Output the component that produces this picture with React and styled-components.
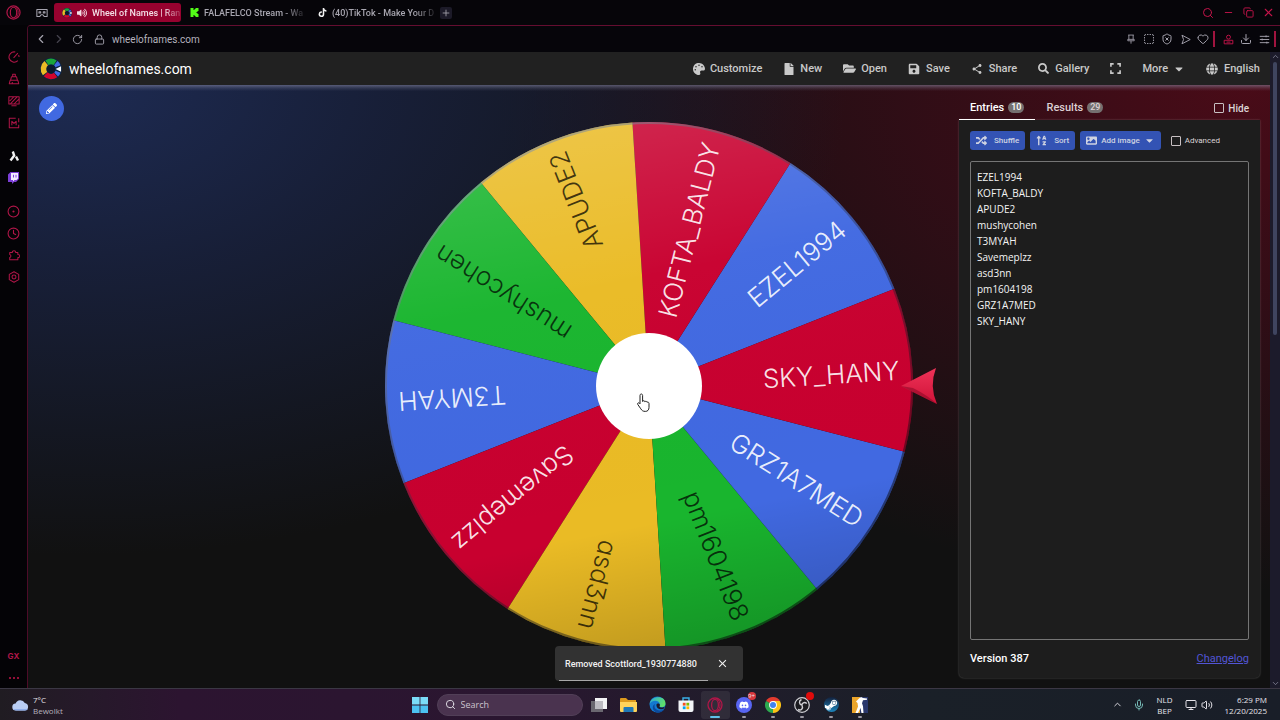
import React from "react";
import styled, {createGlobalStyle} from "styled-components";
import {
    FaPalette, FaFile, FaFolderOpen, FaSave, FaSearch, FaCaretDown, FaGlobe,
    FaRandom, FaSortAlphaUp, FaImage, FaVolumeUp, FaTiktok, FaPencilAlt,
    FaSteamSymbol, FaDiscord
} from "react-icons/fa";
import {MdShare, MdClose} from "react-icons/md";
import {SiKick} from "react-icons/si";
import {
    ChevronLeft, ChevronRight, ChevronUp, ChevronDown, RotateCw, Lock, SquareDashed, ShieldX,
    Heart, Download, Search, Minus, Copy, X, Clock, CircleDot,
    Mic, Volume2, Monitor, Plus
} from "lucide-react";

const gxRed = "#c4144a";
const gxMuted = "#b01648";
const blue = "#4169e1";
const buttonBlue = "#3353b4";
const uiFont = `Roboto, "Liberation Sans", sans-serif`;
const systemFont = `"Open Sans", "Noto Sans", sans-serif`;

const GlobalStyle = createGlobalStyle`
    * {
        box-sizing: border-box;
    }
    body {
        margin: 0;
        background: #111;
        color: white;
        font-family: ${uiFont};
        overflow: hidden;
    }
    button {
        border: 0;
        background: none;
        color: inherit;
        font: inherit;
        padding: 0;
        cursor: pointer;
    }
    a {
        color: inherit;
        text-decoration: none;
    }
    svg {
        display: block;
        flex: none;
    }
`

const Screen = styled.div`
    height: 100vh;
    display: flex;
    flex-direction: column;
`

const TabBar = styled.header`
    height: 25px;
    flex: none;
    display: flex;
    align-items: center;
    background: #060509;
    padding: 0 6px;
    font-size: 9px;
`

const OperaButton = styled.button`
    width: 16px;
    color: ${gxMuted};
`

const WorkspaceButton = styled.button`
    margin: 0 6px 0 14px;
    color: #a5a3ae;
`

const Tab = styled.a`
    width: 127px;
    height: 19px;
    margin-right: 1px;
    padding: 0 8px;
    display: flex;
    align-items: center;
    gap: 5px;
    border-radius: 3px;
    color: ${({active}) => active ? "#f3dfe7" : "#a8a6b0"};
    background: ${({active}) => active ? "#97022f" : "transparent"};
    font-weight: 500;
`

const TabTitle = styled.span`
    flex: 1;
    white-space: nowrap;
    mask-image: linear-gradient(90deg, black 80%, rgba(0, 0, 0, .2));
`

const NewTab = styled.button`
    display: grid;
    place-items: center;
    width: 12px;
    height: 12px;
    margin-left: 2px;
    border-radius: 2px;
    background: #1c1a28;
    color: #a8a6b0;
`

const WindowControls = styled.div`
    display: flex;
    gap: 8px;
    margin-left: auto;
    color: ${gxRed};

    button {
        display: grid;
        place-items: center;
        width: 12px;
    }
`

const Body = styled.div`
    flex: 1;
    min-height: 0;
    display: flex;
    background: #040306;
`

const Sidebar = styled.nav`
    width: 27px;
    flex: none;
    display: flex;
    flex-direction: column;
    justify-content: space-between;
    padding: 21px 0 2px;
    color: ${gxMuted};
`

const SideGroup = styled.div`
    display: flex;
    flex-direction: column;
    margin-bottom: ${({last}) => last ? "0" : "11px"};

    button {
        height: 22px;
        display: grid;
        place-items: center;
        font-family: Inter, ${uiFont};
        font-size: 8px;
        font-weight: 700;
    }
`

const Window = styled.div`
    flex: 1;
    min-width: 0;
    display: flex;
    flex-direction: column;
    border-left: 1px solid #4d0c28;
    border-top: 1px solid #640d30;
    border-top-left-radius: 4px;
    overflow: hidden;
`

const AddressBar = styled.div`
    height: 26px;
    flex: none;
    display: flex;
    align-items: center;
    background: #06050a;
    color: #a5a3ae;
    padding-left: 4px;
`

const BarButton = styled.button`
    width: 18px;
    height: 18px;
    display: grid;
    place-items: center;
    color: ${({tone}) => tone || "inherit"};
`

const LockSlot = styled.span`
    width: 26px;
    display: grid;
    place-items: center;
`

const Address = styled.span`
    flex: 1;
    font-size: 10px;
    color: #b5b3be;
`

const RedMark = styled.i`
    width: 2px;
    height: 16px;
    margin: 0 4px 0 1px;
    background: #a0143f;
`

const Page = styled.div`
    flex: 1;
    min-height: 0;
    display: flex;
`

const Site = styled.div`
    flex: 1;
    min-width: 0;
    display: flex;
    flex-direction: column;
`

const ScrollTrack = styled.div`
    width: 10px;
    flex: none;
    display: flex;
    flex-direction: column;
    align-items: center;
    gap: 1px;
    background: #1c1b2b;
    color: #8b8ca0;
`

const ScrollThumb = styled.div`
    height: 43%;
    width: 4px;
    margin-bottom: auto;
    border-radius: 2px;
    background: #3f4560;
`

const SiteHeader = styled.header`
    height: 33px;
    flex: none;
    display: flex;
    align-items: center;
    justify-content: space-between;
    background: #212121;
    padding: 0 10px 0 12px;
`

const Brand = styled.a`
    display: flex;
    align-items: center;
    gap: 7px;
    font-size: 14px;
    color: white;
`

const Menu = styled.nav`
    display: flex;
    align-items: center;
    gap: 21px;
    font-size: 11px;
    font-weight: 500;
    color: #c9c9c9;
`

const MenuButton = styled.button`
    display: flex;
    align-items: center;
    gap: ${({tight}) => tight ? "5px" : "6px"};
`

const Stage = styled.main`
    flex: 1;
    min-height: 0;
    position: relative;
    display: grid;
    grid-template-columns: 1fr auto 1fr;
    padding-top: 1px;
    background:
        linear-gradient(180deg, rgba(150, 150, 180, .5), rgba(150, 150, 180, .2) 3px, transparent 6px),
        radial-gradient(ellipse 62% 78% at 4% 0%, rgba(30, 44, 86, .95), rgba(26, 36, 70, .72) 40%, transparent 100%),
        radial-gradient(ellipse 60% 84% at 98% 0%, rgba(76, 11, 24, .95), rgba(60, 12, 24, .72) 45%, transparent 100%),
        #111;
`

const EditButton = styled.button`
    width: 25px;
    height: 25px;
    margin: 10px 0 0 11px;
    display: grid;
    place-items: center;
    border-radius: 50%;
    background: ${blue};
    color: white;
`

const WheelSvg = styled.svg`
    height: calc(100vh - 120px);
    aspect-ratio: 1;
`

const WheelLabel = styled.text`
    font-family: Inter, "Liberation Sans", sans-serif;
    font-size: 26px;
    font-weight: 350;
    font-feature-settings: "cv11", "cv09";
    text-anchor: end;
    dominant-baseline: central;
    fill: ${({dark}) => dark ? "rgba(0, 0, 0, .72)" : "rgba(255, 255, 255, .9)"};
`

const SidePanel = styled.aside`
    justify-self: end;
    width: 301px;
    margin: 0 10px 10px 0;
    display: flex;
    flex-direction: column;
`

const PanelTabs = styled.div`
    height: 34px;
    flex: none;
    display: flex;
    align-items: flex-end;
    font-size: 11px;
    font-weight: 500;
`

const PanelTab = styled.button`
    height: 24px;
    padding: 0 11px;
    display: flex;
    align-items: center;
    gap: 4px;
    color: ${({active}) => active ? "white" : "#ddd0d3"};
    border-bottom: 1px solid ${({active}) => active ? "white" : "transparent"};
`

const Badge = styled.span`
    padding: 0 3px;
    line-height: 11px;
    border-radius: 6px;
    background: #757070;
    font-size: 9px;
`

const CheckLabel = styled.label`
    display: flex;
    align-items: center;
    gap: 4px;
    font-size: ${({small}) => small ? "8px" : "10px"};
    color: #dcd5d6;
    margin-left: ${({push}) => push ? "auto" : "5px"};
    padding: ${({push}) => push ? "0 11px 0 0" : "0"};
    height: ${({push}) => push ? "24px" : "auto"};
`

const Checkbox = styled.input`
    appearance: none;
    width: 10px;
    height: 10px;
    margin: 0;
    border: 1px solid #c8c0c2;
    border-radius: 1px;
`

const PanelCard = styled.section`
    flex: 1;
    min-height: 0;
    display: flex;
    flex-direction: column;
    padding: 11px;
    background: #1d1d1d;
    border-radius: 0 0 5px 5px;
    box-shadow: 0 0 2px rgba(255, 255, 255, .3);
`

const Tools = styled.div`
    display: flex;
    align-items: center;
    gap: 5px;
    margin-bottom: 11px;
`

const ToolButton = styled.button`
    height: 19px;
    padding: 0 6px;
    display: flex;
    align-items: center;
    gap: ${({wide}) => wide ? "7px" : "4px"};
    border-radius: 3px;
    background: ${buttonBlue};
    color: #cfd3e2;
    font-size: 8px;
    font-weight: 500;
    white-space: nowrap;
`

const EntriesBox = styled.textarea`
    flex: 1;
    width: 100%;
    resize: none;
    padding: 7px 6px;
    border: 1px solid #757575;
    border-radius: 2px;
    background: transparent;
    color: #f4f4f4;
    font-family: ${systemFont};
    font-size: 10px;
    line-height: 16px;
`

const PanelFooter = styled.footer`
    display: flex;
    justify-content: space-between;
    align-items: center;
    padding-top: 11px;
    line-height: 16px;
    font-size: 11px;
    font-weight: 500;

    a {
        color: #5355d6;
        font-weight: 400;
        text-decoration: underline;
    }
`

const Toast = styled.div`
    position: absolute;
    bottom: 7px;
    left: 50%;
    transform: translateX(-50%);
    width: 188px;
    height: 35px;
    padding: 0 14px 0 10px;
    display: flex;
    align-items: center;
    justify-content: space-between;
    border-radius: 4px;
    background: #323232;
    font-size: 9px;
    font-weight: 500;
    color: #f2f2f2;
    white-space: nowrap;

    &::after {
        content: "";
        position: absolute;
        left: 4px;
        bottom: 0;
        width: 79%;
        height: 1px;
        background: #a8a8a8;
    }
`

const Taskbar = styled.footer`
    height: 32px;
    flex: none;
    display: grid;
    grid-template-columns: 1fr auto 1fr;
    align-items: center;
    border-top: 1px solid #3b3744;
    background: linear-gradient(90deg, #201c22 0%, #26192a 7%, #2c1430 14%, #2a1630 40%, #211c2b 56%, #1a2028 72%, #191e28 100%);
    font-family: ${systemFont};
    font-size: 8px;
    line-height: 11px;
    color: #e6e4ea;
`

const Weather = styled.div`
    display: flex;
    align-items: center;
    gap: 4px;
    padding-left: 12px;
`

const Muted = styled.span`
    color: #b5b1bb;
`

const Apps = styled.div`
    display: flex;
    align-items: center;
`

const AppButton = styled.button`
    position: relative;
    width: 29px;
    height: 28px;
    display: grid;
    place-items: center;
    border-radius: 3px;
    background: ${({active}) => active ? "rgba(255, 255, 255, .07)" : "none"};

    &::after {
        content: "";
        position: absolute;
        bottom: 1px;
        width: ${({active}) => active ? "10px" : "4px"};
        height: 2px;
        border-radius: 1px;
        background: ${({active, running}) => active ? "#5fc0ea" : running ? "#9b99a3" : "none"};
    }
`

const SearchBox = styled.label`
    width: 146px;
    height: 22px;
    margin: 0 2px;
    padding: 0 7px;
    display: flex;
    align-items: center;
    gap: 5px;
    border-radius: 11px;
    border: 1px solid #513f57;
    background: #4a334f;

    input {
        width: 100%;
        padding: 0;
        border: 0;
        outline: 0;
        background: none;
        font: inherit;
        font-size: 9px;
        color: white;
    }
    input::placeholder {
        color: #cbc3ce;
        opacity: 1;
    }
`

const Notice = styled.span`
    position: absolute;
    top: 1px;
    right: 3px;
    min-width: 8px;
    height: 8px;
    line-height: 8px;
    border-radius: 4px;
    background: ${({tone}) => tone};
    font-size: 6px;
    text-align: center;
`

const Tray = styled.div`
    display: flex;
    align-items: center;
    justify-content: flex-end;
    padding-right: 13px;
`

const TrayText = styled.div`
    text-align: ${({align}) => align};
    margin-left: 12px;
`

const TrayIcons = styled.div`
    display: flex;
    gap: ${({gap}) => gap};
    margin-left: 12px;
    align-items: center;
`

const entries = [
    {name: "EZEL1994", color: "#4169e1"},
    {name: "KOFTA_BALDY", color: "#c8002f"},
    {name: "APUDE2", color: "#eabb25", dark: true},
    {name: "mushycohen", color: "#19b52e", dark: true},
    {name: "T3MYAH", color: "#4169e1"},
    {name: "Savemeplzz", color: "#c8002f"},
    {name: "asd3nn", color: "#eabb25", dark: true},
    {name: "pm1604198", color: "#19b52e", dark: true},
    {name: "GRZ1A7MED", color: "#4169e1"},
    {name: "SKY_HANY", color: "#c8002f"}
];

const wheelRadius = 264;
const sliceAngle = 360 / entries.length;
const firstAngle = -39.6;

function point(angle) {
    const rad = angle * Math.PI / 180;
    return `${wheelRadius * Math.cos(rad)} ${wheelRadius * Math.sin(rad)}`;
}

function Wheel() {
    return (
        <WheelSvg viewBox="-300 -300 600 600" role="img" aria-label="Wheel">
            <defs>
                <linearGradient id="shade" x1="0.4" y1="0" x2="0.6" y2="1">
                    <stop offset="0" stopColor="#fff" stopOpacity=".15"/>
                    <stop offset=".3" stopColor="#fff" stopOpacity=".02"/>
                    <stop offset=".75" stopColor="#000" stopOpacity="0"/>
                    <stop offset="1" stopColor="#000" stopOpacity=".18"/>
                </linearGradient>
                <linearGradient id="rim" x1="0" y1="0" x2=".7" y2="1">
                    <stop offset="0" stopColor="#b5c4cc" stopOpacity=".7"/>
                    <stop offset=".5" stopColor="#334" stopOpacity=".4"/>
                    <stop offset="1" stopColor="#000" stopOpacity=".5"/>
                </linearGradient>
                <linearGradient id="pointer" x1="0" y1="0" x2="0" y2="1">
                    <stop offset="0" stopColor="#ee3358"/>
                    <stop offset="1" stopColor="#d01238"/>
                </linearGradient>
            </defs>
            {entries.map((entry, i) => {
                const middle = firstAngle - i * sliceAngle;
                return (
                    <path
                        key={entry.name}
                        fill={entry.color}
                        d={`M0 0L${point(middle - sliceAngle / 2)}A${wheelRadius} ${wheelRadius} 0 0 1 ${point(middle + sliceAngle / 2)}Z`}
                    />
                );
            })}
            <circle r={wheelRadius} fill="url(#shade)"/>
            <circle r={wheelRadius - 1} fill="none" stroke="url(#rim)" strokeWidth="2"/>
            {entries.map((entry, i) => (
                <WheelLabel
                    key={entry.name}
                    dark={entry.dark}
                    x="251"
                    transform={`rotate(${firstAngle - i * sliceAngle})`}
                >
                    {entry.name}
                </WheelLabel>
            ))}
            <circle r="53" fill="#fff"/>
            <path d="M252 0L287 -18Q280 0 288 18Z" fill="url(#pointer)"/>
            <path d="M252 0L264 2Q278 9 288 18Z" fill="#8f0a28" opacity=".6"/>
            <path
                d="M-9 9.500c0-2 2.600-2 2.600 0v6c.4-1.200 2.200-1 2.300.3.600-.8 2-.6 2.100.5.700-.6 2 0 2 1.100v4c0 2.600-1.400 4-3.700 4-2.300 0-3.400-.8-4.500-2.600l-3-4.300c-.8-1.300.7-2.300 1.700-1.300l.5.600z"
                fill="#fff" stroke="#222" strokeWidth="1"
            />
        </WheelSvg>
    );
}

function WheelLogo({size}) {
    return (
        <svg width={size} height={size} viewBox="0 0 24 24" fill="none" strokeWidth="6">
            <circle cx="12" cy="12" r="12" fill="#0c2440"/>
            <path d="M7.500 5.200A8.200 8.200 0 0 1 16.500 5.200" stroke="#1ba53a"/>
            <path d="M5.500 17A8.200 8.200 0 0 1 6.800 5.600" stroke="#eabb25"/>
            <path d="M17 18.500A8.200 8.200 0 0 1 6.200 17.800" stroke="#d2042d"/>
            <path d="M17.200 5.700A8.200 8.200 0 0 1 19.600 9M19.600 15A8.200 8.200 0 0 1 17.600 18" stroke="#4169e1"/>
            <circle cx="12" cy="12" r="4.500" fill="#0b1a2c"/>
            <path d="M17 12l6-3v6z" fill="#fff"/>
        </svg>
    );
}

function OperaLogo({size}) {
    return (
        <svg width={size} height={size} viewBox="0 0 16 16" fill="none" stroke={gxMuted} strokeWidth="1.300">
            <circle cx="8" cy="8" r="7"/>
            <ellipse cx="8" cy="8" rx="3.400" ry="5.600"/>
            <path d="M10 2c4 2 4 10 0 12" strokeWidth="1"/>
        </svg>
    );
}

// outlined 14x14 icon used by the browser chrome
function LineIcon({d, size = 12}) {
    return (
        <svg width={size} height={size} viewBox="0 0 14 14" fill="none" stroke="currentColor" strokeWidth="1.200" strokeLinejoin="round">
            <path d={d}/>
        </svg>
    );
}

const line = {
    gauge: "M8.500 1.200A6 6 0 1 0 11.500 11.200M12.900 7a6 6 0 0 0-.6-2.300M6.500 8l5-5.500",
    cleaner: "M5.500 1.500h3v3h-3zM4 4.500h6l1 4H3zM2.500 8.500h9l1 4h-11zM5 12.500V10.500",
    screen: "M1 2h12v8.500H1zM4 12.500h6M2 7l5-5M3 10l8-8M7 10.500l6-6",
    mods: "M9 1.500H1.500v11h11V9M12.500 1.500V6M4.500 9.500V5l2.500 2.500L9.500 5v4.500",
    puzzle: "M2 4h3a2 2 0 1 1 4 0h2.500v2.500a1.800 1.800 0 1 1 0 3.500V12.500H2V10a1.800 1.800 0 0 0 0-3.500z",
    hexagon: "M7 .8l5.500 3.100v6.200L7 13.200l-5.500-3.100V3.900zM9.300 7a2.300 2.300 0 1 1-4.600 0 2.300 2.300 0 0 1 4.600 0z",
    workspace: "M1 3h12v8H9.500L8 9H6l-1.500 2H1zM3.500 5.500h2v1.500h-2zM8.500 5.500h2v1.500h-2z",
    profile: "M9.500 4a2.500 2.500 0 1 1-5 0 2.500 2.500 0 0 1 5 0zM1.500 12.500V8h11v4.500zM4.500 10.300h5",
    sliders: "M1 3h12M1 7h12M1 11h12M9 1.800v2.400M4 5.800v2.400M10 9.800v2.400",
    pin: "M3 1.500h8M4 1.500v6M10 1.500v6M2.500 7.500h9M2.500 7.500v2h9v-2M7 9.500v4",
    play: "M2.500 1.500L13 7 2.500 12.500 4.500 7z"
};

function BrowserSidebar() {
    return (
        <Sidebar>
            <div>
                <SideGroup>
                    <button aria-label="Speed"><LineIcon d={line.gauge}/></button>
                    <button aria-label="Cleaner"><LineIcon d={line.cleaner}/></button>
                    <button aria-label="Player"><LineIcon d={line.screen}/></button>
                    <button aria-label="Mods"><LineIcon d={line.mods}/></button>
                </SideGroup>
                <SideGroup>
                    <button aria-label="Aria">
                        <svg width="12" height="12" viewBox="0 0 12 12" fill="none" stroke="#f2f2f2" strokeWidth="2.400">
                            <path d="M4.800 1.500L6.200 5.500 2.500 10.500M8 6.500l2 4"/>
                        </svg>
                    </button>
                    <button aria-label="Twitch">
                        <svg width="11" height="12" viewBox="0 0 11 12">
                            <path d="M2.500 0H11v7L8 10H6l-2 2V10H0V2.500z" fill="#7c3fd6"/>
                            <path d="M3 1h7v5.500L8.500 8h-2L5 9.500V8H3z" fill="#f3edff"/>
                            <path d="M5.500 2.800v2.700M8 2.800v2.700" stroke="#7c3fd6"/>
                        </svg>
                    </button>
                </SideGroup>
                <SideGroup>
                    <button aria-label="Player"><CircleDot size={13} strokeWidth={2}/></button>
                    <button aria-label="History"><Clock size={13} strokeWidth={2}/></button>
                    <button aria-label="Extensions"><LineIcon d={line.puzzle}/></button>
                    <button aria-label="Settings"><LineIcon d={line.hexagon}/></button>
                </SideGroup>
            </div>
            <div>
                <SideGroup last>
                    <button>GX</button>
                </SideGroup>
                <button aria-label="More">
                    <svg width="27" height="8" viewBox="0 0 27 8" fill={gxRed}>
                        <circle cx="10" cy="4" r="1"/>
                        <circle cx="14" cy="4" r="1"/>
                        <circle cx="18" cy="4" r="1"/>
                    </svg>
                </button>
            </div>
        </Sidebar>
    );
}

function BrowserTabs() {
    return (
        <TabBar>
            <OperaButton aria-label="Menu"><OperaLogo size={15}/></OperaButton>
            <WorkspaceButton aria-label="Workspace"><LineIcon d={line.workspace}/></WorkspaceButton>
            <Tab href="#wheel" active>
                <WheelLogo size={10}/>
                <FaVolumeUp size={10}/>
                <TabTitle>Wheel of Names | Ran</TabTitle>
            </Tab>
            <Tab href="#kick">
                <SiKick size={9} color="#53fc18"/>
                <TabTitle>FALAFELCO Stream - Wa</TabTitle>
            </Tab>
            <Tab href="#tiktok">
                <FaTiktok size={9} color="#f2f2f2"/>
                <TabTitle>(40)TikTok - Make Your D</TabTitle>
            </Tab>
            <NewTab aria-label="New tab"><Plus size={10}/></NewTab>
            <WindowControls>
                <button aria-label="Search"><Search size={12}/></button>
                <button aria-label="Minimize"><Minus size={11}/></button>
                <button aria-label="Restore"><Copy size={11}/></button>
                <button aria-label="Close"><X size={13}/></button>
            </WindowControls>
        </TabBar>
    );
}

function BrowserAddress() {
    return (
        <AddressBar>
            <BarButton aria-label="Back"><ChevronLeft size={14}/></BarButton>
            <BarButton aria-label="Forward" tone="#45434e"><ChevronRight size={14}/></BarButton>
            <BarButton aria-label="Reload"><RotateCw size={11}/></BarButton>
            <LockSlot><Lock size={11}/></LockSlot>
            <Address>wheelofnames.com</Address>
            <BarButton aria-label="Pin"><LineIcon d={line.pin} size={10}/></BarButton>
            <BarButton aria-label="Snapshot"><SquareDashed size={12}/></BarButton>
            <BarButton aria-label="Blocker"><ShieldX size={12}/></BarButton>
            <BarButton aria-label="Send"><LineIcon d={line.play} size={11}/></BarButton>
            <BarButton aria-label="Favourite"><Heart size={12}/></BarButton>
            <RedMark/>
            <BarButton aria-label="Profile" tone={gxRed}><LineIcon d={line.profile} size={11}/></BarButton>
            <BarButton aria-label="Downloads"><Download size={12}/></BarButton>
            <BarButton aria-label="Easy setup"><LineIcon d={line.sliders} size={11}/></BarButton>
            <RedMark/>
        </AddressBar>
    );
}

function SiteMenu() {
    return (
        <SiteHeader>
            <Brand href="#home"><WheelLogo size={22}/>wheelofnames.com</Brand>
            <Menu>
                <MenuButton tight><FaPalette size={12}/>Customize</MenuButton>
                <MenuButton tight><FaFile size={12}/>New</MenuButton>
                <MenuButton tight><FaFolderOpen size={13}/>Open</MenuButton>
                <MenuButton><FaSave size={12}/>Save</MenuButton>
                <MenuButton><MdShare size={12}/>Share</MenuButton>
                <MenuButton><FaSearch size={11}/>Gallery</MenuButton>
                <MenuButton aria-label="Fullscreen">
                    <svg width="11" height="11" viewBox="0 0 12 12" fill="none" stroke="currentColor" strokeWidth="1.800">
                        <path d="M1 4V1h3M8 1h3v3M11 8v3H8M4 11H1V8"/>
                    </svg>
                </MenuButton>
                <MenuButton tight>More<FaCaretDown size={12}/></MenuButton>
                <MenuButton><FaGlobe size={12}/>English</MenuButton>
            </Menu>
        </SiteHeader>
    );
}

function EntriesPanel() {
    return (
        <SidePanel>
            <PanelTabs>
                <PanelTab active>Entries<Badge>10</Badge></PanelTab>
                <PanelTab>Results<Badge>29</Badge></PanelTab>
                <CheckLabel push><Checkbox type="checkbox"/>Hide</CheckLabel>
            </PanelTabs>
            <PanelCard>
                <Tools>
                    <ToolButton wide><FaRandom size={11}/>Shuffle</ToolButton>
                    <ToolButton wide><FaSortAlphaUp size={11}/>Sort</ToolButton>
                    <ToolButton><FaImage size={11}/>Add image<FaCaretDown size={11}/></ToolButton>
                    <CheckLabel small><Checkbox type="checkbox"/>Advanced</CheckLabel>
                </Tools>
                <EntriesBox
                    aria-label="Entries"
                    spellCheck={false}
                    defaultValue={entries.map(entry => entry.name).join("\n")}
                />
                <PanelFooter>
                    <span>Version 387</span>
                    <a href="#changelog">Changelog</a>
                </PanelFooter>
            </PanelCard>
        </SidePanel>
    );
}

function StartIcon() {
    return (
        <svg width="16" height="16" viewBox="0 0 16 16" fill="#4cc2f1">
            <path d="M0 0h7.600v7.600H0zM8.400 0H16v7.600H8.400z" fill="#7bdcf8"/>
            <path d="M0 8.400h7.600V16H0zM8.400 8.400H16V16H8.400z"/>
        </svg>
    );
}

function TaskViewIcon() {
    return (
        <svg width="16" height="16" viewBox="0 0 16 16">
            <rect x="0" y="4" width="12" height="11" fill="#6a6770"/>
            <rect x="4" y="1" width="12" height="11" fill="#f3f3f5"/>
            <rect x="4" y="4" width="8" height="8" fill="#bdbbc2"/>
        </svg>
    );
}

function FolderIcon() {
    return (
        <svg width="17" height="16" viewBox="0 0 17 16">
            <path d="M0 2a1 1 0 0 1 1-1h5l2 2h8v4H0z" fill="#dd9a1d"/>
            <path d="M0 5h17v9a1 1 0 0 1-1 1H1a1 1 0 0 1-1-1z" fill="#ffd35b"/>
            <path d="M3.500 15v-4a1 1 0 0 1 1-1h8a1 1 0 0 1 1 1v4z" fill="#1f78b8"/>
        </svg>
    );
}

function EdgeIcon() {
    return (
        <svg width="17" height="17" viewBox="0 0 17 17">
            <defs>
                <linearGradient id="edgeTop" x1="0" x2="1" y1="0" y2=".4">
                    <stop offset="0" stopColor="#2aa6e0"/>
                    <stop offset="1" stopColor="#5fe06a"/>
                </linearGradient>
            </defs>
            <circle cx="8.500" cy="8.500" r="8" fill="#1379cf"/>
            <path d="M.6 8C1-.5 16.500-1.500 16.500 7.500c0 3-2.500 4-5 3.500-1.800-.4-.6-1.200-.6-2.500C10.900 4 3 3.500.6 8z" fill="url(#edgeTop)"/>
            <path d="M6 8c-2 4 2 8.500 9 5.500-3 4.500-9.500 4-11-.5C3.300 10.500 4.500 8.500 6 8z" fill="#0b4a9c"/>
            <path d="M7.400 9c0-2 3.500-2 3.500 0 0 1.200-1.200 1.700.4 2.200 1.400.4 3.400.2 4.300-.8.300 2-2.200 3.200-4.300 2.900C9 13 7.400 11.300 7.400 9z" fill="#1b1b2b"/>
        </svg>
    );
}

function StoreIcon() {
    return (
        <svg width="16" height="17" viewBox="0 0 16 17">
            <path d="M5 5V2h6v3" fill="none" stroke="#39b0e8" strokeWidth="1.400"/>
            <path d="M.5 4.500h15V14a2 2 0 0 1-2 2h-11a2 2 0 0 1-2-2z" fill="#f2f4f7"/>
            <path d="M4.800 6.800h2.800v2.800H4.800z" fill="#f25022"/>
            <path d="M8.400 6.800h2.800v2.800H8.400z" fill="#7fba00"/>
            <path d="M4.800 10.400h2.800v2.800H4.800z" fill="#00a4ef"/>
            <path d="M8.400 10.400h2.800v2.800H8.400z" fill="#ffb900"/>
        </svg>
    );
}

function DiscordIcon() {
    return (
        <svg width="16" height="16" viewBox="0 0 16 16">
            <circle cx="8" cy="8" r="8" fill="#5865f2"/>
            <FaDiscord x="3" y="3" size={10} color="#fff"/>
        </svg>
    );
}

function ChromeIcon() {
    return (
        <svg width="16" height="16" viewBox="0 0 16 16">
            <path d="M8 8L1.070 4A8 8 0 0 1 14.930 4z" fill="#e33b2e"/>
            <path d="M8 8L14.930 4A8 8 0 0 1 8 16z" fill="#fbc116"/>
            <path d="M8 8V16A8 8 0 0 1 1.070 4z" fill="#2da94f"/>
            <path d="M8 4h6.930L11.500 10z" fill="#fbc116"/>
            <circle cx="8" cy="8" r="3.900" fill="#fff"/>
            <circle cx="8" cy="8" r="3" fill="#3f82ee"/>
        </svg>
    );
}

function ObsIcon() {
    return (
        <svg width="16" height="16" viewBox="0 0 16 16" fill="none" stroke="#cfcfd4">
            <circle cx="8" cy="8" r="7.300" fill="#1b1b20" strokeWidth="1.200"/>
            <path d="M7.500 2.500C4.500 4 5 7.500 8 8M12.800 6.500C10.500 4.500 7.500 6 8 8.500M4 12.500c3 1.500 5.500-1 4-4.200" strokeWidth="1.400"/>
        </svg>
    );
}

function SteamIcon() {
    return (
        <svg width="15" height="15" viewBox="0 0 16 16">
            <defs>
                <linearGradient id="steam" x1="0" y1="0" x2="0" y2="1">
                    <stop offset="0" stopColor="#13203c"/>
                    <stop offset="1" stopColor="#1d86bd"/>
                </linearGradient>
            </defs>
            <circle cx="8" cy="8" r="8" fill="url(#steam)"/>
            <FaSteamSymbol x="0" y="1" size={15} color="#fff"/>
        </svg>
    );
}

function CsIcon() {
    return (
        <svg width="16" height="16" viewBox="0 0 16 16">
            <path d="M0 0h8v16H0z" fill="#eba52a"/>
            <path d="M8 0h8v16H8z" fill="#29376b"/>
            <path d="M7 1.500L9 0l2 1 4 .5v1.200l-4 .5-1 3 1 3 .5 7H9.500L8.500 11 6 16H3.500L6 9.500 5.500 6 4 4.500z" fill="#fff"/>
        </svg>
    );
}

function CloudIcon() {
    return (
        <svg width="17" height="12" viewBox="0 0 17 12">
            <path d="M4 11.500a3.500 3.500 0 0 1-.4-7A5 5 0 0 1 12.800 4a3.800 3.800 0 0 1 .2 7.500z" fill="#b9cdf4"/>
            <path d="M4 11.500a3.500 3.500 0 0 1-2.800-1.500h14.700a3.500 3.500 0 0 1-2.900 1.500z" fill="#8fadea"/>
        </svg>
    );
}

function DesktopTaskbar() {
    return (
        <Taskbar>
            <Weather>
                <CloudIcon/>
                <div>7°C<br/><Muted>Bewolkt</Muted></div>
            </Weather>
            <Apps>
                <AppButton aria-label="Start"><StartIcon/></AppButton>
                <SearchBox>
                    <Search size={11}/>
                    <input type="text" placeholder="Search" aria-label="Search"/>
                </SearchBox>
                <AppButton aria-label="Task view"><TaskViewIcon/></AppButton>
                <AppButton aria-label="Explorer"><FolderIcon/></AppButton>
                <AppButton aria-label="Edge"><EdgeIcon/></AppButton>
                <AppButton aria-label="Store"><StoreIcon/></AppButton>
                <AppButton aria-label="Opera" active><OperaLogo size={16}/></AppButton>
                <AppButton aria-label="Discord" running><DiscordIcon/><Notice tone="#d8383e">9+</Notice></AppButton>
                <AppButton aria-label="Chrome" running><ChromeIcon/></AppButton>
                <AppButton aria-label="OBS" running><ObsIcon/><Notice tone="#e00b0b"/></AppButton>
                <AppButton aria-label="Steam" running><SteamIcon/></AppButton>
                <AppButton aria-label="Game" running><CsIcon/></AppButton>
            </Apps>
            <Tray>
                <TrayIcons gap="10px">
                    <ChevronUp size={11}/>
                    <Mic size={12} color="#74b8b4"/>
                </TrayIcons>
                <TrayText align="center">NLD<br/>BEP</TrayText>
                <TrayIcons gap="4px">
                    <Monitor size={12}/>
                    <Volume2 size={12}/>
                </TrayIcons>
                <TrayText align="right">6:29 PM<br/>12/20/2025</TrayText>
            </Tray>
        </Taskbar>
    );
}

export default function App() {
    return (
        <>
            <GlobalStyle/>
            <Screen>
                <BrowserTabs/>
                <Body>
                    <BrowserSidebar/>
                    <Window>
                        <BrowserAddress/>
                        <Page>
                            <Site>
                                <SiteMenu/>
                                <Stage>
                                    <EditButton aria-label="Edit title"><FaPencilAlt size={11}/></EditButton>
                                    <Wheel/>
                                    <EntriesPanel/>
                                    <Toast role="status">
                                        Removed Scottlord_1930774880
                                        <button aria-label="Dismiss"><MdClose size={13}/></button>
                                    </Toast>
                                </Stage>
                            </Site>
                            <ScrollTrack>
                                <ChevronUp size={9}/>
                                <ScrollThumb/>
                                <ChevronDown size={9}/>
                            </ScrollTrack>
                        </Page>
                    </Window>
                </Body>
                <DesktopTaskbar/>
            </Screen>
        </>
    );
}
